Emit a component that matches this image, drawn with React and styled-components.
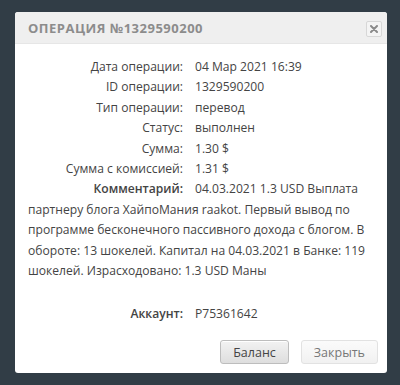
import React from "react";
import styled, { createGlobalStyle } from "styled-components";

const Global = createGlobalStyle`
  html, body { margin: 0; padding: 0; background: #313d46; }
  body { font-family: "Open Sans", "Liberation Sans", sans-serif; }
`;

const Page = styled.div`
  width: 400px;
  height: 385px;
  padding: 12px 14px 0 15px;
  box-sizing: border-box;
`;

const Dialog = styled.div`
  width: 372px;
  height: 361px;
  background: #fff;
  border-radius: 3px;
  display: flex;
  flex-direction: column;
  overflow: hidden;
`;

const Header = styled.div`
  height: 31px;
  background: #efefef;
  display: flex;
  align-items: center;
  justify-content: space-between;
  padding: 0 5px 0 13px;
  border-bottom: 1px solid #e6e6e6;
`;

const Title = styled.div`
  font-size: 13px;
  font-weight: 700;
  color: #8c8c8c;
  letter-spacing: 0.5px;
`;

const Close = styled.button`
  width: 16px;
  height: 16px;
  padding: 0;
  margin-top: 2px;
  border: 1px solid #d7d7d7;
  border-radius: 2px;
  background: #f4f4f4;
  display: flex;
  align-items: center;
  justify-content: center;
`;

const Body = styled.div`
  flex: 1;
  padding: 13px 10px 0 13px;
  color: #444;
  font-size: 12.1px;
  line-height: 20.4px;
`;

const Row = styled.div`
  display: grid;
  grid-template-columns: 155px 1fr;
  column-gap: 12px;
`;

const Label = styled.span`
  text-align: right;
  font-weight: ${(p) => (p.$strong ? 600 : 400)};
`;

const Value = styled.span``;

const Comment = styled.p`
  margin: 0;
`;

const InlineLabel = styled.span`
  display: inline-block;
  width: 155px;
  margin-right: 12px;
  text-align: right;
  font-weight: 600;
`;

const Account = styled(Row)`
  margin-top: 23px;
`;

const Footer = styled.div`
  display: flex;
  justify-content: flex-end;
  gap: 12px;
  padding: 0 9px 9px 0;
`;

const Button = styled.button`
  height: 24px;
  padding: 0 12px;
  min-width: ${(p) => (p.$primary ? "67px" : "74px")};
  font-family: "Open Sans", "Liberation Sans", sans-serif;
  font-size: 12.5px;
  color: ${(p) => (p.$primary ? "#444" : "#777")};
  border-radius: 3px;
  border: 1px solid ${(p) => (p.$primary ? "#bdbdbd" : "#e2e2e2")};
  background: ${(p) =>
    p.$primary
      ? "linear-gradient(#f2f2f2, #dedede)"
      : "linear-gradient(#fbfbfb, #f1f1f1)"};
  box-shadow: ${(p) => (p.$primary ? "inset 0 1px 0 #fff" : "none")};
`;

const rows = [
  ["Дата операции:", "04 Мар 2021 16:39"],
  ["ID операции:", "1329590200"],
  ["Тип операции:", "перевод"],
  ["Статус:", "выполнен"],
  ["Сумма:", "1.30 $"],
  ["Сумма с комиссией:", "1.31 $"],
];

export default function App() {
  return (
    <>
      <Global />
      <Page>
        <Dialog>
          <Header>
            <Title>ОПЕРАЦИЯ №1329590200</Title>
            <Close aria-label="close">
              <svg width="8" height="8" viewBox="0 0 8 8">
                <path d="M1 1L7 7M7 1L1 7" stroke="#8a8a8a" strokeWidth="2" strokeLinecap="round" />
              </svg>
            </Close>
          </Header>
          <Body>
            {rows.map(([l, v]) => (
              <Row key={l}>
                <Label>{l}</Label>
                <Value>{v}</Value>
              </Row>
            ))}
            <Comment>
              <InlineLabel>Комментарий:</InlineLabel>
              04.03.2021 1.3 USD Выплата партнеру блога ХайпоМания raakot. Первый вывод по программе бесконечного пассивного дохода с блогом. В обороте: 13 шокелей. Капитал на 04.03.2021 в Банке: 119 шокелей. Израсходовано: 1.3 USD Маны
            </Comment>
            <Account>
              <Label $strong>Аккаунт:</Label>
              <Value>P75361642</Value>
            </Account>
          </Body>
          <Footer>
            <Button $primary>Баланс</Button>
            <Button>Закрыть</Button>
          </Footer>
        </Dialog>
      </Page>
    </>
  );
}
